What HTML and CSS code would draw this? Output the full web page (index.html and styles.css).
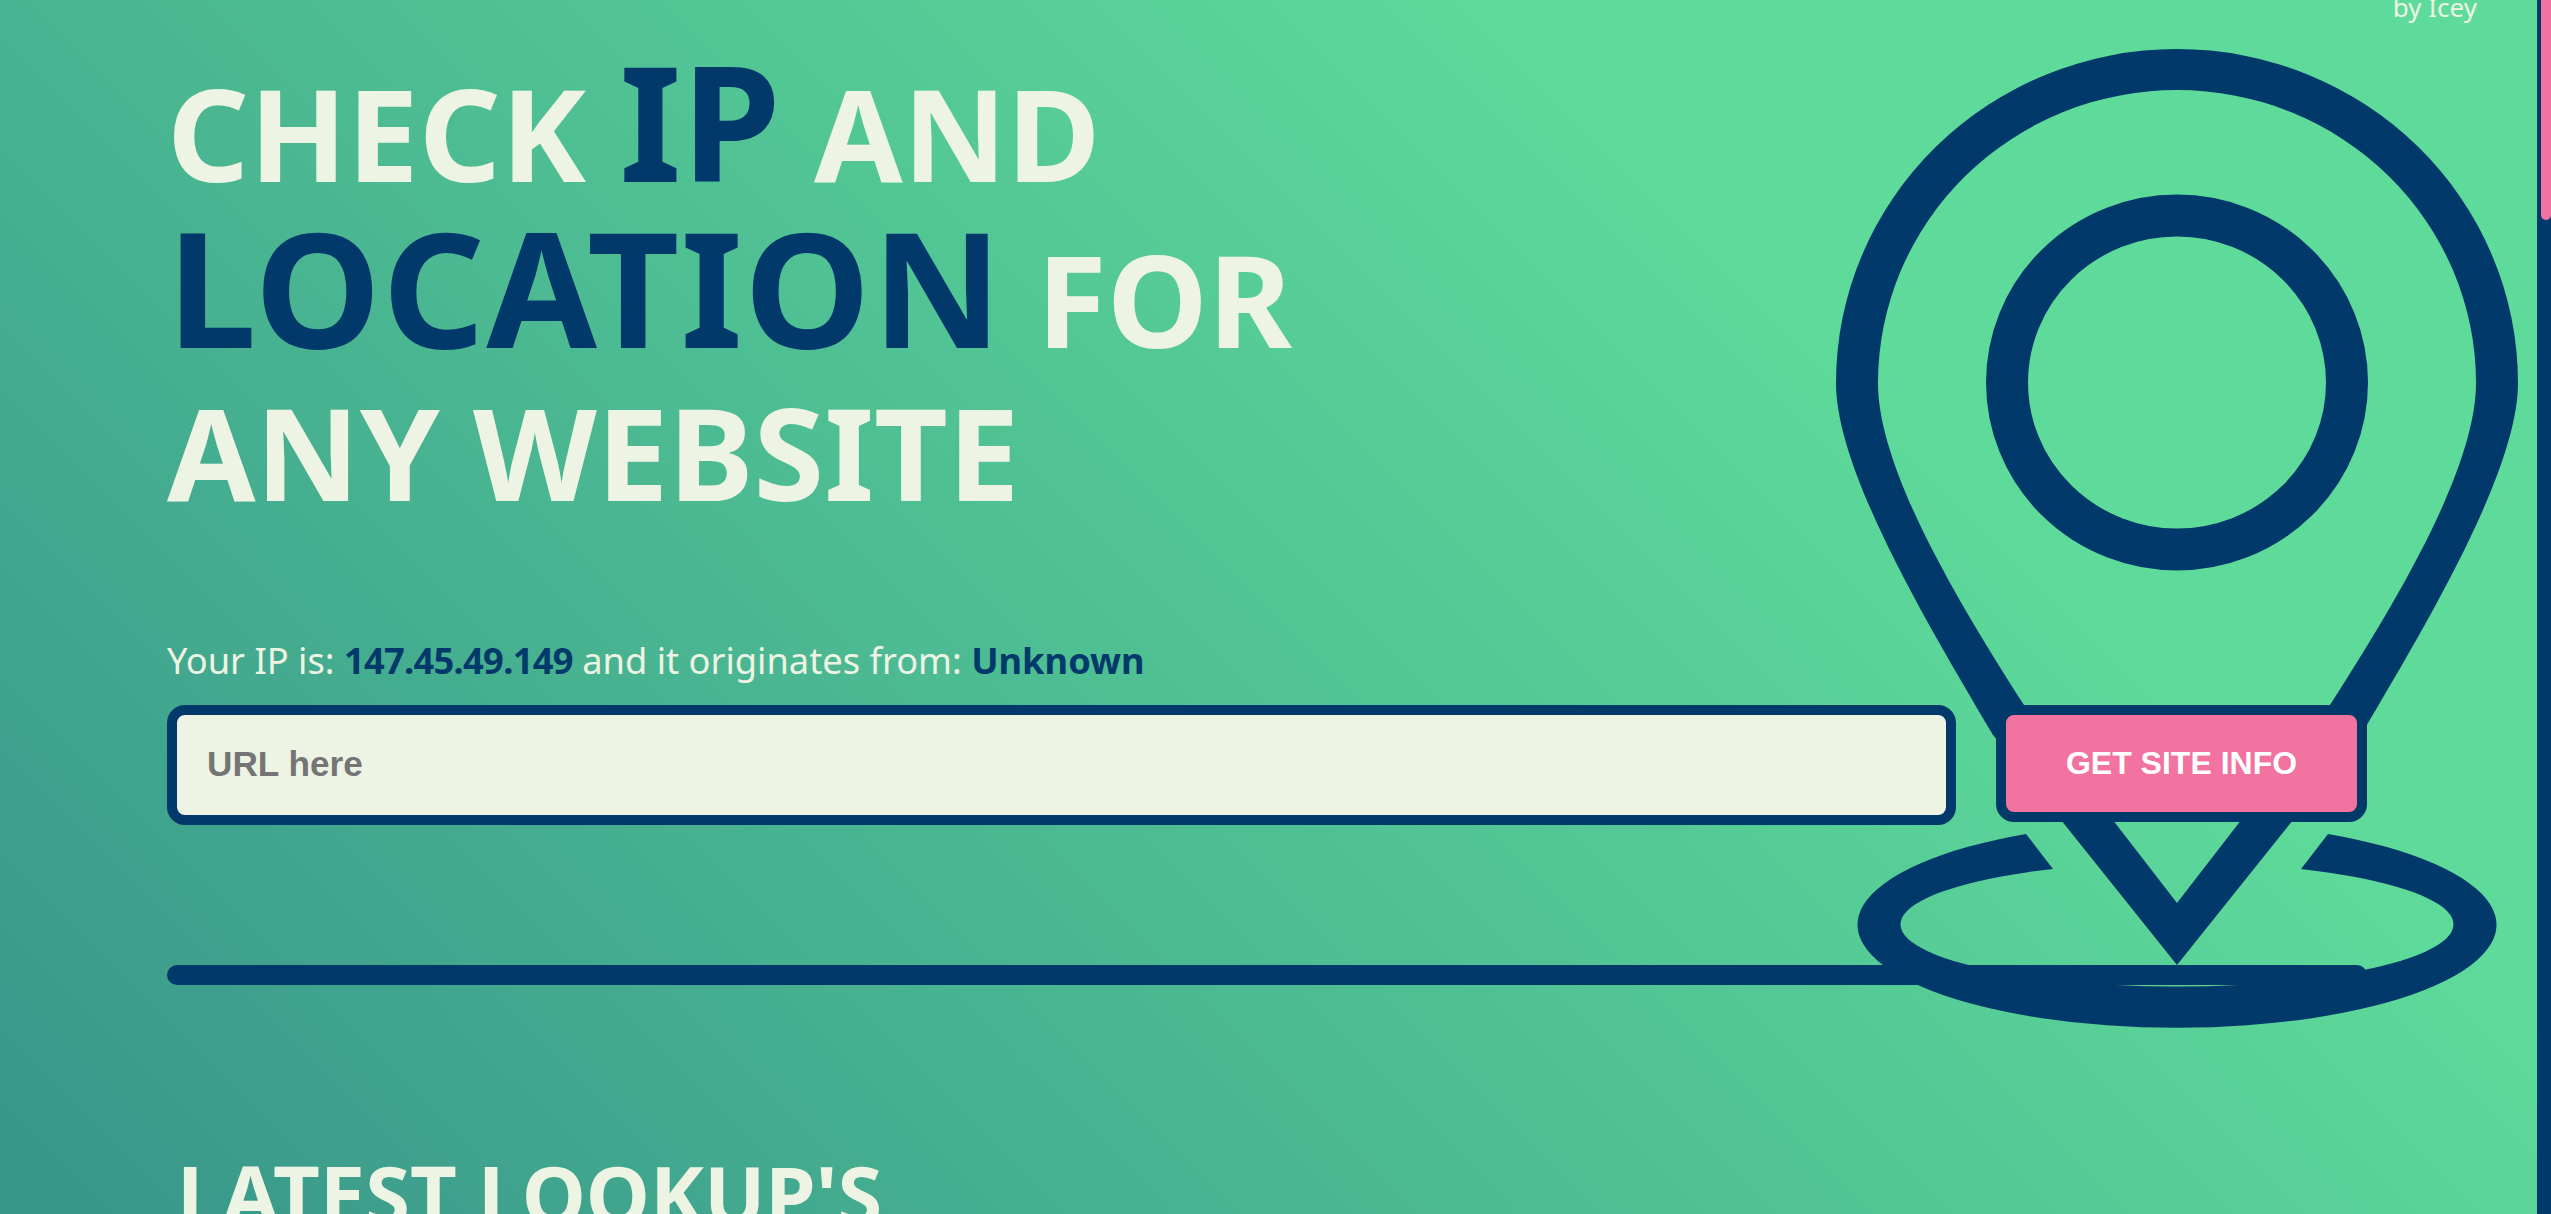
FILE: index.html
```html
<!DOCTYPE html>
<html lang="en">
<head>
<meta charset="utf-8">
<title>Check IP and location</title>
<link rel="stylesheet" href="styles.css">
</head>
<body>
<main class="hero">
  <span class="credit">by Icey</span>
  <svg class="pin" viewBox="1830 40 700 1000" aria-hidden="true">
    <path fill-rule="evenodd" d="M2177 49 A341 334 0 0 0 1836 383 C1836 470 1925 620 1993 735 L2177 965 L2361 735 C2429 620 2518 470 2518 383 A341 334 0 0 0 2177 49 Z M2177 90 A299 293 0 0 1 2476 383 C2476 465 2404 590 2330 705 L2177 903 L2024 705 C1950 590 1878 465 1878 383 A299 293 0 0 1 2177 90 Z"/>
    <ellipse class="pin-ring" cx="2177" cy="382.5" rx="170" ry="167"/>
    <path d="M2026 834 A319.5 103 0 1 0 2328 834 L2301 869 A276.5 62 0 1 1 2053 869 Z"/>
  </svg>
  <div class="hero-inner">
    <h1 class="title">Check <strong>IP</strong> and<br><strong class="title-wide">Location</strong> for<br>any website</h1>
    <p class="origin">Your IP is: <b class="origin-ip">147.45.49.149</b> and it originates from: <b>Unknown</b></p>
    <form class="lookup">
      <input class="lookup-input" type="text" placeholder="URL here">
      <button class="lookup-button" type="button">GET SITE INFO</button>
    </form>
    <div class="rule"></div>
    <h2 class="latest">Latest Lookup's</h2>
  </div>
</main>
<aside class="scrollbar"><div class="scrollbar-thumb"></div></aside>
</body>
</html>
```
FILE: styles.css
```css
html, body { height: 100%; }
body {
  display: flex;
  margin: 0;
  overflow: hidden;
  font-family: "Noto Sans", sans-serif;
  color: #eef4e3;
}
.hero {
  position: relative;
  flex: 1;
  overflow: hidden;
  background: linear-gradient(45deg, #38958a 0, #5edb9a 1951px, #5edb9a 100%);
}
.scrollbar {
  flex: none;
  width: 14px;
  padding-left: 4px;
  box-sizing: border-box;
  background: #00396a;
}
.scrollbar-thumb {
  height: 220px;
  border-radius: 0 0 6px 6px;
  background: #f273a0;
}
.credit {
  position: absolute;
  top: -11px;
  right: 60px;
  font-size: 26px;
}
.pin {
  position: absolute;
  left: 1830px;
  top: 40px;
  width: 700px;
  height: 1000px;
  fill: #00396a;
}
.pin-ring {
  fill: none;
  stroke: #00396a;
  stroke-width: 42;
}
.hero-inner {
  position: relative;
  width: 2200px;
  margin-left: 167px;
  padding-top: 44px;
}
.title {
  margin: 0;
  font-size: 128px;
  font-weight: 700;
  line-height: 153.6px;
  text-transform: uppercase;
}
.title strong {
  font-size: 160px;
  font-weight: 700;
  color: #00396a;
}
.title .title-wide { letter-spacing: 1.25px; }
.origin {
  margin: 106px 0 20px;
  font-size: 36.25px;
}
.origin b { color: #00396a; }
.origin .origin-ip { letter-spacing: -0.7px; }
.lookup {
  display: flex;
  align-items: flex-start;
  gap: 40px;
}
.lookup-input {
  flex: 1;
  box-sizing: border-box;
  height: 120px;
  padding: 0 30px 2px;
  border: 10px solid #00396a;
  border-radius: 18px;
  background: #eef4e3;
  font: 700 35.2px "Liberation Sans", sans-serif;
  outline: none;
}
.lookup-input::placeholder { color: #757575; }
.lookup-button {
  box-sizing: border-box;
  width: 371px;
  height: 117px;
  border: 10px solid #00396a;
  border-radius: 18px;
  background: #f273a0;
  color: #fff;
  font: 700 32px "Liberation Sans", sans-serif;
}
.rule {
  height: 20px;
  margin-top: 140px;
  border-radius: 10px;
  background: #00396a;
}
.latest {
  margin: 160px 0 0 10px;
  font-size: 81.2px;
  font-weight: 700;
  line-height: 1.2;
  text-transform: uppercase;
}
```
